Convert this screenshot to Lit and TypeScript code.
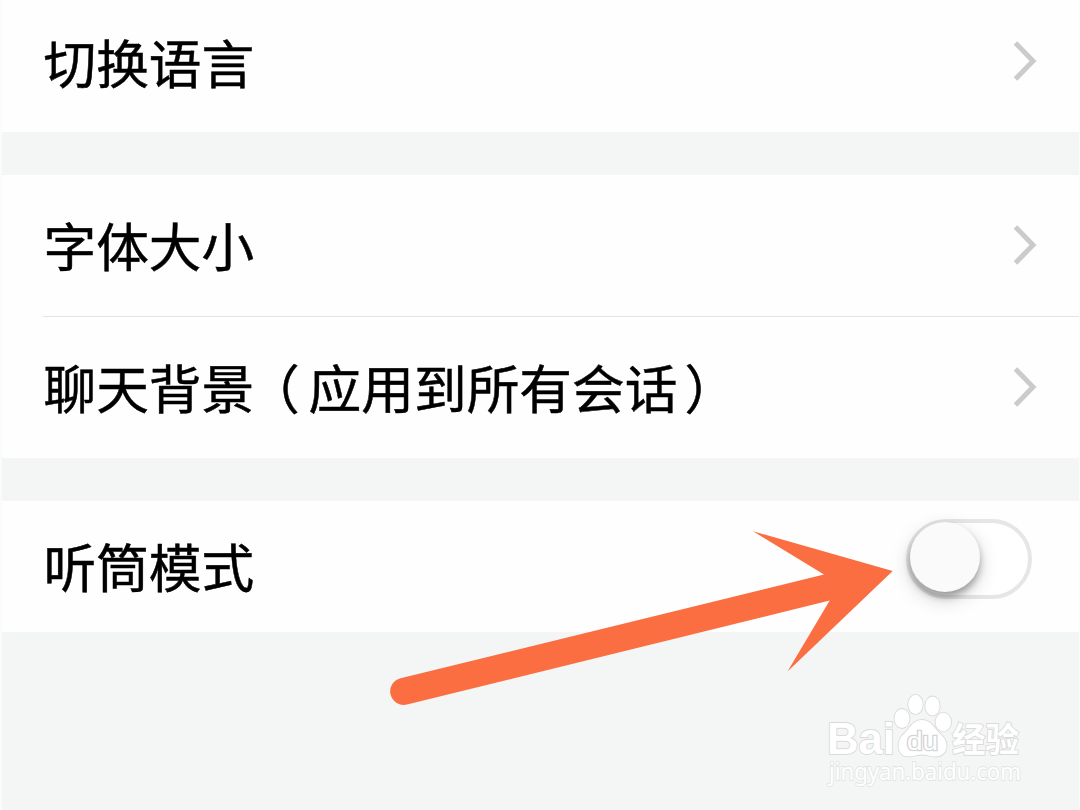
// app.ts
import { LitElement, html, svg, css } from 'lit';

export class SettingsRow extends LitElement {
  static properties = {
    toggle: { type: Boolean }
  };

  static styles = css`
    :host {
      display: flex;
      align-items: center;
      justify-content: space-between;
      box-sizing: border-box;
      padding: 0 41px 2px 43.5px;
    }
    .label {
      padding-bottom: 1px;
      font-size: 52.7px;
      line-height: 60px;
      white-space: nowrap;
      color: #000;
      -webkit-text-stroke: 0.5px #000;
    }
    .chevron {
      display: block;
      width: 28px;
      height: 44px;
    }
    .switch {
      display: block;
      box-sizing: border-box;
      width: 126px;
      height: 80px;
      margin: 0 7px 13px 0;
      border: 4px solid #e6e6e6;
      border-radius: 40px;
      background: #fff;
    }
    .knob {
      width: 70px;
      height: 70px;
      margin-top: -1px;
      border-radius: 50%;
      background: #fafafa;
      box-shadow: 0 5px 7px rgba(0, 0, 0, 0.3), 0 7px 20px rgba(0, 0, 0, 0.18);
    }
  `;

  toggle = false;

  render() {
    return html`
      <div class="label"><slot></slot></div>
      ${this.toggle
        ? html`<div class="switch"><div class="knob"></div></div>`
        : html`
            <svg class="chevron" viewBox="0 0 28 44">
              <path d="M4.5 4 L22 22 L4.5 40" fill="none" stroke="#cbcbcb" stroke-width="5" />
            </svg>
          `}
    `;
  }
}

customElements.define('settings-row', SettingsRow);

export class AppRoot extends LitElement {
  static styles = css`
    :host {
      display: block;
      position: relative;
      box-sizing: border-box;
      width: 1080px;
      height: 810px;
      overflow: hidden;
      background: #f4f6f6;
      border-left: 2px solid #fafbfb;
      border-right: 1px solid #fafbfb;
      font-family: 'Noto Sans CJK SC', sans-serif;
    }
    .page {
      display: flex;
      flex-direction: column;
      gap: 43px;
      margin: 0 -1px 0 -2px;
    }
    .group {
      background: #fefefe;
    }
    .language {
      height: 132px;
      padding-bottom: 10px;
    }
    .row {
      height: 141px;
    }
    .divider {
      height: 1px;
      margin-left: 43px;
      background: #e3e4e4;
    }
    .earpiece {
      height: 131px;
    }
    .open,
    .close {
      font-feature-settings: 'halt';
    }
    .open {
      padding: 0 9px 0 19px;
    }
    .close {
      padding-left: 7px;
    }
    .overlay {
      position: absolute;
      top: 0;
      left: -2px;
      width: 1080px;
      height: 810px;
    }
    .mark {
      fill: #fff;
      stroke: #d9dada;
      stroke-width: 1.8px;
      paint-order: stroke;
    }
    .brand {
      font: bold 44px 'Liberation Sans', sans-serif;
    }
    .brand-cn {
      font: bold 34px 'Noto Sans CJK SC', sans-serif;
    }
    .inner {
      font: 26px 'Liberation Sans', sans-serif;
      stroke: #d4d5d5;
      stroke-width: 2.6px;
    }
    .site {
      font: 24px 'Noto Sans', sans-serif;
      stroke: #e3e5e5;
    }
  `;

  render() {
    return html`
      <div class="page">
        <div class="group">
          <settings-row class="language">切换语言</settings-row>
        </div>
        <div class="group">
          <settings-row class="row">字体大小</settings-row>
          <div class="divider"></div>
          <settings-row class="row">聊天背景<span class="open">（</span>应用到所有会话<span class="close">）</span></settings-row>
        </div>
        <div class="group">
          <settings-row class="earpiece" toggle>听筒模式</settings-row>
        </div>
      </div>
      <svg class="overlay" viewBox="0 0 1080 810">
        ${this._arrow()} ${this._watermark()}
      </svg>
    `;
  }

  _arrow() {
    return svg`
      <path
        fill="#fa6e41"
        d="M400.5 678.2 L824 574.5 L753 531.3 L892.7 571 L787.5 671.5 L829.7 600.5 L407 704.5 A13.4 13.4 0 0 1 400.5 678.2 Z"
      />
    `;
  }

  _watermark() {
    return svg`
      <g class="mark">
        <text class="brand" x="827" y="754" textLength="68" lengthAdjust="spacingAndGlyphs">Bai</text>
        <ellipse cx="902" cy="718.5" rx="7.5" ry="9.5" />
        <ellipse cx="915.5" cy="704.5" rx="7.2" ry="9.7" />
        <ellipse cx="932.5" cy="706" rx="7.2" ry="9.5" />
        <ellipse cx="943.3" cy="722" rx="7.8" ry="9.2" />
        <path
          d="M922 720 C930 720 933 726 937 730.5 C941 735 946.5 738 946.5 746 C946.5 752 942 756.5 935.5 756.5 C930 756.5 927 754.5 922 754.5 C917 754.5 914 756.5 908.5 756.5 C902 756.5 898.5 752 898.5 746 C898.5 738 903 735 907 730.5 C911 726 914 720 922 720 Z"
        />
        <text class="inner" x="907" y="750" textLength="31" lengthAdjust="spacingAndGlyphs">du</text>
        <text class="brand-cn" x="952" y="752" textLength="67" lengthAdjust="spacingAndGlyphs">经验</text>
        <text class="site" x="829" y="780" textLength="192" lengthAdjust="spacingAndGlyphs">jingyan.baidu.com</text>
      </g>
    `;
  }
}

customElements.define('app-root', AppRoot);
